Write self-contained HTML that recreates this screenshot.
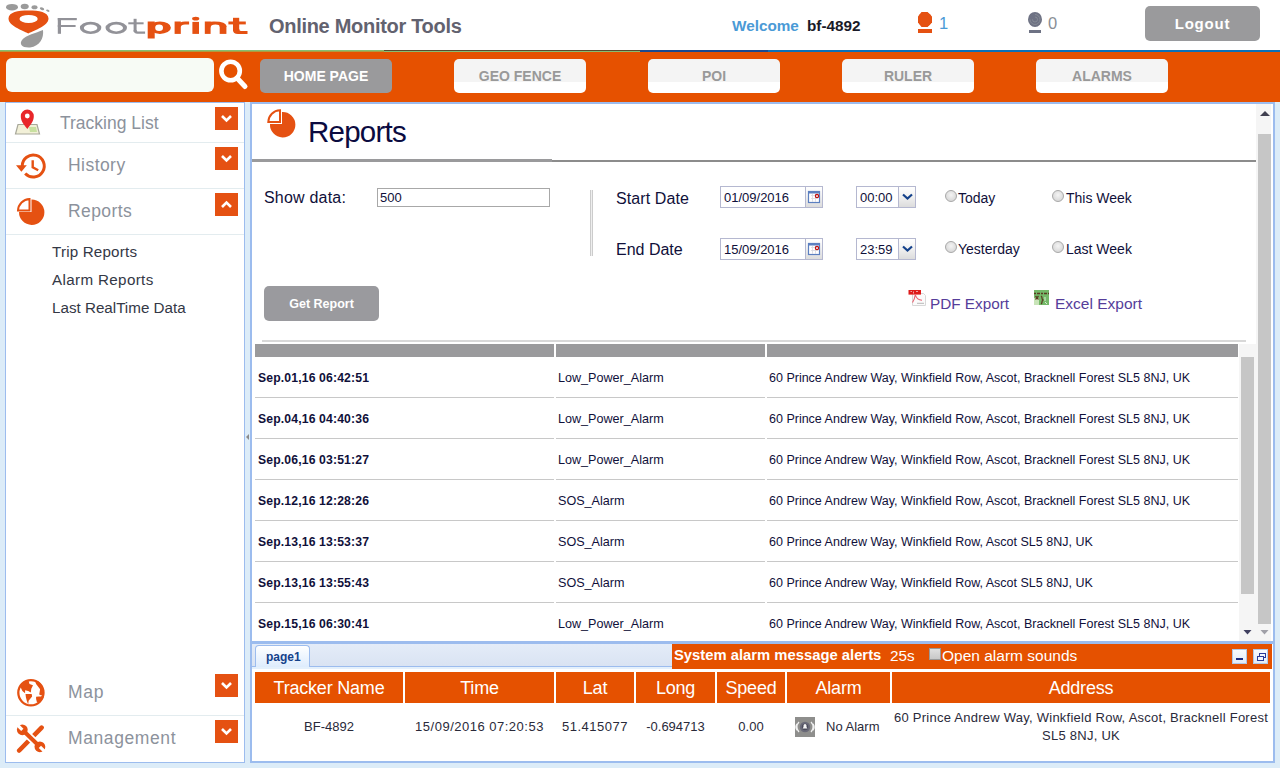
<!DOCTYPE html>
<html><head><meta charset="utf-8">
<style>
*{margin:0;padding:0;box-sizing:border-box}
html,body{width:1280px;height:768px;overflow:hidden}
body{position:relative;background:#dcecf8;font-family:"Liberation Sans",sans-serif;color:#10103a}
.a{position:absolute;white-space:nowrap}
#hdr{position:absolute;left:0;top:0;width:1280px;height:50px;background:#fff}
#nav{position:absolute;left:0;top:52px;width:1280px;height:50px;background:#e65100}
.nbtn{position:absolute;top:59px;width:132px;height:34px;border-radius:5px;background:linear-gradient(#f4f4f4 0,#f4f4f4 67%,#fff 67%);color:#999;font-weight:bold;font-size:14px;text-align:center;line-height:35px}
.panel{position:absolute;background:#fff}
.sbh{position:absolute;left:6px;width:238px;border-bottom:1px solid #e3ecef}
.sbt{position:absolute;color:#8c929c;font-size:17.5px;margin-top:1px}
.dd{position:absolute;left:215px;width:23px;height:23px;background:#e55112}
.dd svg{position:absolute;left:0;top:0}
.sub{position:absolute;left:52px;color:#343846;font-size:15.2px}
.lbl{position:absolute;font-size:15.5px;color:#10103a}
.inp{position:absolute;height:22px;border:1px solid #b5b8d0;background:#fff;font-size:13px;line-height:22px;padding-left:3px;color:#10103a}
.trig{position:absolute;right:0;top:0;width:17px;height:20px;background:linear-gradient(#fff 0,#f4f4f4 40%,#dcdcdc 100%);border-left:1px solid #b5b8d0}
.trig svg{position:absolute;left:0;top:0}
.radio{position:absolute;width:12px;height:12px;border-radius:50%;background:radial-gradient(circle at 50% 40%,#f4f4f4,#cfcfcf);border:1px solid #a8a8a8}
.rl{position:absolute;font-size:14px;color:#10103a}
.row{position:absolute;left:255px;width:983px;height:41px}
.c1{position:absolute;left:3px;top:14px;font-weight:bold;font-size:12.2px;letter-spacing:0.15px}
.c2{position:absolute;left:303px;top:14px;font-size:12.6px}
.c3{position:absolute;left:514px;top:14px;font-size:12.5px}
.sep{position:absolute;height:1px;background:#c8c8c8}
.gh{position:absolute;top:672px;height:31px;background:#e55100;color:#fff;font-size:18px;letter-spacing:-0.2px;text-align:center;line-height:33px}
.gd{position:absolute;top:719px;font-size:13px;color:#2a2a3a;text-align:center}
</style></head><body>

<div id="hdr"></div>
<!-- top line -->
<div class="a" style="left:0;top:50px;width:384px;height:1px;background:#86bd73"></div>
<div class="a" style="left:0;top:51px;width:384px;height:1px;background:#b09a40"></div>
<div class="a" style="left:384px;top:50px;width:256px;height:1px;background:#5a4a30"></div>
<div class="a" style="left:384px;top:51px;width:256px;height:1px;background:#86bd73"></div>
<div class="a" style="left:640px;top:50px;width:128px;height:2px;background:#1a4a90"></div>
<div class="a" style="left:768px;top:50px;width:512px;height:2px;background:#0a70b8"></div>

<!-- logo -->
<svg class="a" style="left:0;top:0" width="260" height="50">
  <g fill="#9a9a9a">
    <ellipse cx="12" cy="7.2" rx="6" ry="3.3"/>
    <ellipse cx="24.7" cy="6.5" rx="4" ry="2.7"/>
    <ellipse cx="34.5" cy="7.2" rx="3" ry="2"/>
    <ellipse cx="42" cy="8.8" rx="2.3" ry="1.3" transform="rotate(20 42 8.8)"/>
    <ellipse cx="47.8" cy="10.7" rx="1.8" ry="1" transform="rotate(25 47.8 10.7)"/>
    <path d="M43 30 C44 38 40 46 30 47.5 C22 48 19 44 22 40 C26 35 36 33 43 30Z"/>
  </g>
  <path fill="#e55112" d="M28.3 33.5 C22 30 8.5 26 8.5 18.5 C8.5 12 18 10.4 28.5 10.4 C39 10.4 48.5 12 48.5 18.5 C48.5 26 35 30 28.3 33.5Z"/>
  <ellipse cx="28.6" cy="18.9" rx="9.1" ry="4" fill="#fff"/>
  <g fill="#929298">
    <rect x="57.8" y="18" width="3.2" height="15.8"/>
    <rect x="57.8" y="18" width="19" height="2.2"/>
    <rect x="57.8" y="25" width="17.8" height="2"/>
    <rect x="133.6" y="18.8" width="3" height="13"/>
    <rect x="128.3" y="22.3" width="15.3" height="2"/>
    <path d="M133.6 30 Q133.6 33.8 137.5 33.8 H145.1 V31.6 H138 Q136.6 31.6 136.6 30Z"/>
  </g>
  <path fill="#929298" fill-rule="evenodd" d="M79.89999999999999 27.9 A10.7 6.2 0 1 0 101.3 27.9 A10.7 6.2 0 1 0 79.89999999999999 27.9Z M83.8 27.9 A6.8 3.5 0 1 0 97.39999999999999 27.9 A6.8 3.5 0 1 0 83.8 27.9Z"/>
  <path fill="#929298" fill-rule="evenodd" d="M105.55 27.9 A10.7 6.2 0 1 0 126.95 27.9 A10.7 6.2 0 1 0 105.55 27.9Z M109.45 27.9 A6.8 3.5 0 1 0 123.05 27.9 A6.8 3.5 0 1 0 109.45 27.9Z"/>
  <g fill="#e55112">
    <rect x="147.7" y="21.5" width="7" height="17"/>
    <path fill-rule="evenodd" d="M149 27.7 A10.9 6.2 0 1 0 170.9 27.7 A10.9 6.2 0 1 0 149 27.7Z M155.2 27.7 A3.9 3.3 0 1 0 163 27.7 A3.9 3.3 0 1 0 155.2 27.7Z"/>
    <rect x="174.6" y="21.5" width="6.2" height="12.4"/>
    <path d="M178 25 Q179 21.5 185 21.5 H189.1 V24.5 H185 Q181 24.5 180.8 27Z"/>
    <rect x="192.4" y="21.9" width="6.6" height="12"/>
    <ellipse cx="195.7" cy="18.65" rx="3.6" ry="1.8"/>
    <rect x="204.8" y="21.5" width="5.8" height="12.4"/>
    <rect x="219.7" y="25.5" width="6.7" height="8.4"/>
    <path d="M205 26 Q206 21.5 214 21.5 Q226.4 21.5 226.4 26.5 V27 H219.7 V26.5 Q219.7 24.5 215.5 24.5 Q210.6 24.5 210.6 27.5Z"/>
    <rect x="233" y="17.8" width="6.2" height="13"/>
    <path d="M233 30 Q233 33.9 238 33.9 H247.5 V31 H241 Q239.2 31 239.2 29Z"/>
    <rect x="228.4" y="21.5" width="17.4" height="2.9"/>
  </g>
</svg>
<div class="a" style="left:269px;top:15px;font-size:20px;letter-spacing:-0.3px;font-weight:bold;color:#62626f">Online Monitor Tools</div>
<div class="a" style="left:732px;top:17px;font-size:15.3px;font-weight:bold;color:#4a9ad6">Welcome</div>
<div class="a" style="left:807px;top:17px;font-size:15.3px;font-weight:bold;color:#1a1a28">bf-4892</div>
<!-- person icon orange -->
<svg class="a" style="left:914px;top:10px" width="22" height="26">
  <path d="M7.5 2 H13.5 L18 6.5 V12.5 L13.5 17 H7.5 L4 12.5 V6.5Z" fill="#e55112"/>
  <ellipse cx="11" cy="9.5" rx="7" ry="7.4" fill="#e55112"/>
  <rect x="4" y="19" width="14" height="4" fill="#e55112"/>
</svg>
<div class="a" style="left:939px;top:14px;font-size:16.5px;color:#4a9ad6">1</div>
<svg class="a" style="left:1026px;top:10px" width="20" height="26">
  <ellipse cx="9" cy="9.4" rx="7" ry="7.5" fill="#6e7284"/>
  <path d="M9 4.5 A5 5 0 1 1 4 9.4 M9 7 A2.5 2.5 0 1 1 6.5 9.4" fill="none" stroke="#8a9098" stroke-width="0.8"/>
  <rect x="3" y="20" width="12" height="3" fill="#6e7284"/>
</svg>
<div class="a" style="left:1048px;top:14px;font-size:16.5px;color:#8a8f96">0</div>
<div class="a" style="left:1145px;top:6px;width:115px;height:35px;border-radius:5px;background:#9a9a9c;color:#fff;font-weight:bold;font-size:15px;letter-spacing:0.8px;text-align:center;line-height:35px">Logout</div>

<div id="nav"></div>
<div class="a" style="left:6px;top:58px;width:208px;height:34px;border-radius:6px;background:#f7fbf5"></div>
<svg class="a" style="left:214px;top:56px" width="40" height="40">
  <circle cx="16.6" cy="15" r="9.2" fill="none" stroke="#fff" stroke-width="4.6"/>
  <line x1="23" y1="22" x2="31" y2="30.5" stroke="#fff" stroke-width="5" stroke-linecap="round"/>
</svg>
<div class="nbtn" style="left:260px;background:#9a9a9c;color:#fff">HOME PAGE</div>
<div class="nbtn" style="left:454px">GEO FENCE</div>
<div class="nbtn" style="left:648px">POI</div>
<div class="nbtn" style="left:842px">RULER</div>
<div class="nbtn" style="left:1036px">ALARMS</div>

<!-- sidebar -->
<div class="panel" style="left:5px;top:102px;width:240px;height:661px;border:1px solid #9cbcee"></div>
<div class="sbh" style="top:102px;height:41px"></div>
<div class="sbh" style="top:143px;height:46px"></div>
<div class="sbh" style="top:189px;height:46px"></div>
<div class="sbh" style="top:670px;height:46px"></div>

<svg class="a" style="left:14px;top:108px" width="28" height="28">
  <path d="M4 16.5 L23 16.5 L25.5 26 L1.5 26 Z" fill="#f2f0d8" stroke="#a8a89a" stroke-width="1.2"/>
  <path d="M15 19 L22 19 L23 24 L16 24Z" fill="#c8e0a0"/>
  <path d="M13.3 21 C9 15.5 6.8 12.5 6.8 8 A6.5 6.5 0 0 1 19.8 8 C19.8 12.5 17.6 15.5 13.3 21Z" fill="#e8262a"/>
  <circle cx="13.3" cy="8" r="2.4" fill="#fff"/>
</svg>
<div class="sbt" style="left:60px;top:112px">Tracking List</div>
<div class="dd" style="top:107px"><svg width="23" height="23"><path d="M7 9 L11.5 13.5 L16 9" fill="none" stroke="#fff" stroke-width="2.6"/></svg></div>

<svg class="a" style="left:14px;top:150px" width="36" height="32">
  <path d="M8.25 16 A11 11 0 1 1 11.2 23.5" fill="none" stroke="#e55112" stroke-width="3"/>
  <path d="M2 15.3 L12.8 15.3 L7.4 21.8Z" fill="#e55112"/>
  <path d="M18.7 10.3 V17.3 L24.2 20.2" fill="none" stroke="#e55112" stroke-width="2.4"/>
</svg>
<div class="sbt" style="left:68px;top:154px;letter-spacing:0.45px">History</div>
<div class="dd" style="top:147px"><svg width="23" height="23"><path d="M7 9 L11.5 13.5 L16 9" fill="none" stroke="#fff" stroke-width="2.6"/></svg></div>

<svg class="a" style="left:14px;top:195px" width="32" height="32">
  <path d="M17.5 4.5 L17.5 17 L5 17 A12.7 12.7 0 1 0 17.5 4.5Z" fill="#e55112"/>
  <path d="M4 15.5 A12 12 0 0 1 15.5 4 L15.5 15.5Z" fill="none" stroke="#e55112" stroke-width="2"/>
</svg>
<div class="sbt" style="left:68px;top:200px;letter-spacing:0.4px">Reports</div>
<div class="dd" style="top:193px"><svg width="23" height="23"><path d="M7 14 L11.5 9.5 L16 14" fill="none" stroke="#fff" stroke-width="2.6"/></svg></div>

<div class="sub" style="top:243px;letter-spacing:0.18px">Trip Reports</div>
<div class="sub" style="top:271px;letter-spacing:0.35px">Alarm Reports</div>
<div class="sub" style="top:299px">Last RealTime Data</div>

<svg class="a" style="left:16px;top:677px" width="30" height="30">
  <circle cx="14.9" cy="15.8" r="12.6" fill="none" stroke="#e55112" stroke-width="2.3"/>
  <g fill="#e55112">
  <path d="M4.5 10.1 L8.2 4.6 L12.6 3.8 L13.5 7 L17 8.3 L15.3 11.8 L14.8 15.4 L12.2 14 L9.1 13.2 L9.1 16.3 L6.4 14 Z"/>
  <path d="M9.5 17.1 L15.7 17.1 L16.1 19.4 L12.6 23.8 L12.2 27.5 L10.8 23.8 L9.9 20.2Z"/>
  <path d="M18.8 3.5 L22.8 4.8 L26.3 8.7 L28.1 13.6 L27.6 17.6 L25.4 18.5 L23.2 17.6 L24.1 12.3 L22.8 10.5 L20.1 7Z"/>
  <path d="M20.1 19.8 L22.8 19.4 L25 19.4 L26.3 18.5 L27.6 20.2 L24.5 24.7 L21 25.5 L20.1 22Z"/>
  </g>
</svg>
<div class="sbt" style="left:68px;top:681px;letter-spacing:0.7px">Map</div>
<div class="dd" style="top:674px"><svg width="23" height="23"><path d="M7 9 L11.5 13.5 L16 9" fill="none" stroke="#fff" stroke-width="2.6"/></svg></div>

<svg class="a" style="left:16px;top:723px" width="32" height="32">
  <line x1="3.2" y1="27.5" x2="25.6" y2="4.6" stroke="#e55112" stroke-width="4.6" stroke-linecap="round"/>
  <line x1="6.3" y1="6.8" x2="23.9" y2="23.8" stroke="#fff" stroke-width="7.5"/>
  <line x1="6.3" y1="6.8" x2="23.9" y2="23.8" stroke="#e55112" stroke-width="4"/>
  <circle cx="6.3" cy="6.8" r="5.4" fill="#e55112"/>
  <circle cx="23.9" cy="23.8" r="5.4" fill="#e55112"/>
  <rect x="-1.6" y="-8" width="3.2" height="8" fill="#fff" transform="translate(6.3 6.8) rotate(-45)"/>
  <rect x="-1.6" y="0" width="3.2" height="8" fill="#fff" transform="translate(23.9 23.8) rotate(-45)"/>
</svg>
<div class="sbt" style="left:68px;top:727px;letter-spacing:0.6px">Management</div>
<div class="dd" style="top:720px"><svg width="23" height="23"><path d="M7 9 L11.5 13.5 L16 9" fill="none" stroke="#fff" stroke-width="2.6"/></svg></div>

<!-- splitter arrow -->
<svg class="a" style="left:245px;top:432px" width="5" height="10"><path d="M4 2 L1 5 L4 8Z" fill="#8a8a8a"/></svg>

<!-- main panel -->
<div class="panel" style="left:250px;top:102px;width:1025px;height:542px;border:2px solid #9cbcee;border-bottom:0"></div>
<svg class="a" style="left:265px;top:107px" width="32" height="32">
  <path d="M17 5 L17 17 L5 17 A12.7 12.7 0 1 0 17 5Z" fill="#e55112"/>
  <path d="M3.3 15 A12 12 0 0 1 15 3.3 L15 15Z" fill="none" stroke="#e55112" stroke-width="2"/>
</svg>
<div class="a" style="left:308px;top:115px;font-size:29.5px;letter-spacing:-0.75px;color:#0b0b40">Reports</div>
<div class="a" style="left:252px;top:159px;width:300px;height:3px;background:#9a9a9c"></div>
<div class="a" style="left:552px;top:160px;width:704px;height:2px;background:#8c8c8c"></div>

<div class="lbl" style="left:264px;top:189px;font-size:16px;letter-spacing:0.2px">Show data:</div>
<div class="inp" style="left:377px;top:188px;width:173px;height:19px;border:1px solid #a8a8a8;line-height:17px;padding-left:2px;font-size:13px">500</div>
<div class="a" style="left:590px;top:190px;width:3px;height:66px;background:#eee;border:1px solid #ccc;border-top:0;border-bottom:0"></div>

<div class="lbl" style="left:616px;top:190px;font-size:16px;letter-spacing:0.1px">Start Date</div>
<div class="lbl" style="left:616px;top:241px;font-size:16px;letter-spacing:0px">End Date</div>
<div class="inp" style="left:720px;top:186px;width:103px">01/09/2016<div class="trig"><svg width="17" height="20"><rect x="2.5" y="4.5" width="11" height="11" fill="#fff" stroke="#5b7fc0" stroke-width="1.2"/><rect x="2" y="4" width="12" height="2.5" fill="#5b7fc0"/><path d="M5 8.5H12M5 11.5H12M6.5 7V15M9.5 7V15" stroke="#d8d8e0" stroke-width="0.8"/><circle cx="11" cy="9" r="1.6" fill="none" stroke="#c01010" stroke-width="1.2"/></svg></div></div>
<div class="inp" style="left:720px;top:238px;width:103px">15/09/2016<div class="trig"><svg width="17" height="20"><rect x="2.5" y="4.5" width="11" height="11" fill="#fff" stroke="#5b7fc0" stroke-width="1.2"/><rect x="2" y="4" width="12" height="2.5" fill="#5b7fc0"/><path d="M5 8.5H12M5 11.5H12M6.5 7V15M9.5 7V15" stroke="#d8d8e0" stroke-width="0.8"/><circle cx="11" cy="9" r="1.6" fill="none" stroke="#c01010" stroke-width="1.2"/></svg></div></div>
<div class="inp" style="left:856px;top:186px;width:60px">00:00<div class="trig"><svg width="17" height="20"><path d="M4 7.5 L8.5 11.5 L13 7.5" fill="none" stroke="#15428b" stroke-width="2.2"/></svg></div></div>
<div class="inp" style="left:856px;top:238px;width:60px">23:59<div class="trig"><svg width="17" height="20"><path d="M4 7.5 L8.5 11.5 L13 7.5" fill="none" stroke="#15428b" stroke-width="2.2"/></svg></div></div>
<div class="radio" style="left:945px;top:190px"></div><div class="rl" style="left:958px;top:190px">Today</div>
<div class="radio" style="left:1052px;top:190px"></div><div class="rl" style="left:1066px;top:190px">This Week</div>
<div class="radio" style="left:945px;top:241px"></div><div class="rl" style="left:958px;top:241px">Yesterday</div>
<div class="radio" style="left:1052px;top:241px"></div><div class="rl" style="left:1066px;top:241px">Last Week</div>

<div class="a" style="left:264px;top:286px;width:115px;height:35px;border-radius:5px;background:#9a9a9e;color:#fff;font-weight:bold;font-size:12.5px;text-align:center;line-height:37px">Get Report</div>
<svg class="a" style="left:908px;top:289px" width="19" height="18">
  <path d="M4.5 4.5 H15.5 L17.5 6.5 V16.5 H4.5Z" fill="#fbfbfb" stroke="#d8d8d8" stroke-width="1"/>
  <rect x="0.5" y="1" width="12.5" height="4.6" fill="#de1a1a"/>
  <path d="M2.5 2.5 H4 M5.5 2.5 V4.5 M8 2.5 H10" stroke="#f0a0a0" stroke-width="1"/>
  <path d="M4.5 13.5 C6 11 7 8 7.3 5.8 C8.3 9 10 11 14 11.2" fill="none" stroke="#e86070" stroke-width="1.1"/>
  <path d="M9 14.3 H16" stroke="#b8b8b8" stroke-width="1"/>
</svg>
<div class="a" style="left:930px;top:295px;font-size:15.3px;color:#553d9a">PDF Export</div>
<svg class="a" style="left:1033px;top:289px" width="17" height="17">
  <rect x="1" y="1" width="15" height="15" fill="#74b868"/>
  <rect x="1" y="9" width="5" height="7" fill="#c8e4b8"/>
  <path d="M1 4.5 H16" stroke="#5a3a20" stroke-width="1.3" stroke-dasharray="2 1 3 1"/>
  <path d="M2.5 7 L5.5 10.5 M5.5 7 L2.5 10.5" stroke="#5a3a20" stroke-width="1.2"/>
  <path d="M8 7 C10 8 8 10 10 11 C8 12 10 14 8 15" fill="none" stroke="#5a3a20" stroke-width="1.3"/>
  <path d="M12 8 V12 M12 13 L14 15" stroke="#d8f0d0" stroke-width="1"/>
</svg>
<div class="a" style="left:1055px;top:295px;font-size:15.5px;color:#553d9a">Excel Export</div>

<div class="a" style="left:262px;top:340px;width:984px;height:2px;background:#d8d8d8"></div>
<div class="a" style="left:255px;top:344px;width:299px;height:13px;background:#9a9a9c"></div>
<div class="a" style="left:556px;top:344px;width:209px;height:13px;background:#9a9a9c"></div>
<div class="a" style="left:767px;top:344px;width:471px;height:13px;background:#9a9a9c"></div>

<div class="row" style="top:357px"><div class="c1">Sep.01,16 06:42:51</div><div class="c2">Low_Power_Alarm</div><div class="c3">60 Prince Andrew Way, Winkfield Row, Ascot, Bracknell Forest SL5 8NJ, UK</div></div>
<div class="sep" style="left:255px;top:397px;width:299px"></div><div class="sep" style="left:556px;top:397px;width:209px"></div><div class="sep" style="left:767px;top:397px;width:471px"></div>
<div class="row" style="top:398px"><div class="c1">Sep.04,16 04:40:36</div><div class="c2">Low_Power_Alarm</div><div class="c3">60 Prince Andrew Way, Winkfield Row, Ascot, Bracknell Forest SL5 8NJ, UK</div></div>
<div class="sep" style="left:255px;top:438px;width:299px"></div><div class="sep" style="left:556px;top:438px;width:209px"></div><div class="sep" style="left:767px;top:438px;width:471px"></div>
<div class="row" style="top:439px"><div class="c1">Sep.06,16 03:51:27</div><div class="c2">Low_Power_Alarm</div><div class="c3">60 Prince Andrew Way, Winkfield Row, Ascot, Bracknell Forest SL5 8NJ, UK</div></div>
<div class="sep" style="left:255px;top:479px;width:299px"></div><div class="sep" style="left:556px;top:479px;width:209px"></div><div class="sep" style="left:767px;top:479px;width:471px"></div>
<div class="row" style="top:480px"><div class="c1">Sep.12,16 12:28:26</div><div class="c2">SOS_Alarm</div><div class="c3">60 Prince Andrew Way, Winkfield Row, Ascot, Bracknell Forest SL5 8NJ, UK</div></div>
<div class="sep" style="left:255px;top:520px;width:299px"></div><div class="sep" style="left:556px;top:520px;width:209px"></div><div class="sep" style="left:767px;top:520px;width:471px"></div>
<div class="row" style="top:521px"><div class="c1">Sep.13,16 13:53:37</div><div class="c2">SOS_Alarm</div><div class="c3">60 Prince Andrew Way, Winkfield Row, Ascot SL5 8NJ, UK</div></div>
<div class="sep" style="left:255px;top:561px;width:299px"></div><div class="sep" style="left:556px;top:561px;width:209px"></div><div class="sep" style="left:767px;top:561px;width:471px"></div>
<div class="row" style="top:562px"><div class="c1">Sep.13,16 13:55:43</div><div class="c2">SOS_Alarm</div><div class="c3">60 Prince Andrew Way, Winkfield Row, Ascot SL5 8NJ, UK</div></div>
<div class="sep" style="left:255px;top:602px;width:299px"></div><div class="sep" style="left:556px;top:602px;width:209px"></div><div class="sep" style="left:767px;top:602px;width:471px"></div>
<div class="row" style="top:603px"><div class="c1">Sep.15,16 06:30:41</div><div class="c2">Low_Power_Alarm</div><div class="c3">60 Prince Andrew Way, Winkfield Row, Ascot, Bracknell Forest SL5 8NJ, UK</div></div>

<!-- scrollbars -->
<div class="a" style="left:1239px;top:344px;width:18px;height:297px;background:#f5f5f5"></div>
<div class="a" style="left:1241px;top:357px;width:13px;height:237px;background:#c6c6c6"></div>
<svg class="a" style="left:1243px;top:629px" width="10" height="7"><path d="M0.5 1 H8.5 L4.5 5.5Z" fill="#404060"/></svg>
<div class="a" style="left:1256px;top:104px;width:15px;height:537px;background:#f5f5f5"></div>
<svg class="a" style="left:1258px;top:108px" width="14" height="10"><path d="M2 8 H12 L7 3Z" fill="#404050"/></svg>
<div class="a" style="left:1258px;top:134px;width:13px;height:490px;background:#c6c6c6"></div>
<svg class="a" style="left:1260px;top:629px" width="10" height="7"><path d="M0.5 1 H8.5 L4.5 5.5Z" fill="#a0a0a8"/></svg>

<!-- bottom panel -->
<div class="a" style="left:250px;top:641px;width:1025px;height:3px;background:#9cbcee"></div>
<div class="panel" style="left:250px;top:644px;width:1025px;height:119px;border:2px solid #9cbcee;border-top:0"></div>
<div class="a" style="left:252px;top:644px;width:420px;height:25px;background:linear-gradient(#e4ecf8,#d8e2f2)"></div>
<div class="a" style="left:252px;top:666px;width:420px;height:1px;background:#9cbcee"></div><div class="a" style="left:252px;top:667px;width:420px;height:2px;background:#e4f0fc"></div>
<div class="a" style="left:255px;top:645px;width:55px;height:22px;border:1px solid #9cbcee;border-bottom:0;border-radius:4px 4px 0 0;background:linear-gradient(#ffffff,#deecfd);color:#15428b;font-weight:bold;font-size:12px;line-height:22px;padding-left:10px">page1</div>
<div class="a" style="left:672px;top:644px;width:600px;height:25px;background:#e55100"></div>
<div class="a" style="left:674px;top:647px;font-size:14.8px;font-weight:bold;color:#fff">System alarm message alerts</div>
<div class="a" style="left:890px;top:647px;font-size:15.3px;color:#fff">25s</div>
<div class="a" style="left:929px;top:648px;width:12px;height:12px;background:linear-gradient(#e0e0e0,#c8c8c8);border:1px solid #999"></div>
<div class="a" style="left:942px;top:647px;font-size:15.5px;color:#fff">Open alarm sounds</div>
<div class="a" style="left:1232px;top:649px;width:15px;height:15px;background:linear-gradient(#f8fbfe,#e2ecf8);border:1px solid #b0c8e8"><div style="position:absolute;left:3px;top:8px;width:7px;height:2px;background:#1a2a80"></div></div>
<div class="a" style="left:1253px;top:649px;width:15px;height:15px;background:linear-gradient(#f8fbfe,#e2ecf8);border:1px solid #b0c8e8"><svg style="position:absolute;left:2px;top:2px" width="11" height="11"><rect x="3.5" y="1.5" width="6" height="4" fill="none" stroke="#2a3a98"/><rect x="1.5" y="4.5" width="6" height="4" fill="#f0f6fc" stroke="#2a3a98"/></svg></div>

<div class="gh" style="left:255px;width:148px">Tracker Name</div>
<div class="gh" style="left:405px;width:149px">Time</div>
<div class="gh" style="left:556px;width:78px">Lat</div>
<div class="gh" style="left:636px;width:79px">Long</div>
<div class="gh" style="left:717px;width:68px">Speed</div>
<div class="gh" style="left:787px;width:103px">Alarm</div>
<div class="gh" style="left:892px;width:378px">Address</div>

<div class="gd" style="left:255px;width:148px">BF-4892</div>
<div class="gd" style="left:405px;width:149px;letter-spacing:0.5px">15/09/2016 07:20:53</div>
<div class="gd" style="left:556px;width:78px;letter-spacing:0.5px">51.415077</div>
<div class="gd" style="left:636px;width:79px">-0.694713</div>
<div class="gd" style="left:717px;width:68px">0.00</div>
<svg class="a" style="left:795px;top:717px" width="20" height="20">
  <rect width="20" height="20" fill="#8e8e8c"/>
  <path d="M4 5 A7 7 0 0 0 4 15 M2 7 A5 5 0 0 0 2 13 M16 5 A7 7 0 0 1 16 15 M18 7 A5 5 0 0 1 18 13" fill="none" stroke="#f0f0f0" stroke-width="1.3"/>
  <circle cx="10" cy="10" r="5.2" fill="#6a6a78"/>
  <circle cx="10" cy="10" r="3.2" fill="#4a4a5a"/>
  <path d="M7.5 11.5 H12.5 L11.5 10 V8.5 A1.5 1.5 0 0 0 8.5 8.5 V10Z" fill="#f4f4f4"/>
</svg>
<div class="gd" style="left:826px;font-size:13px">No Alarm</div>
<div class="gd" style="left:892px;width:378px;top:709px;line-height:18px;font-size:13px;letter-spacing:0.25px">60 Prince Andrew Way, Winkfield Row, Ascot, Bracknell Forest<br>SL5 8NJ, UK</div>

</body></html>
